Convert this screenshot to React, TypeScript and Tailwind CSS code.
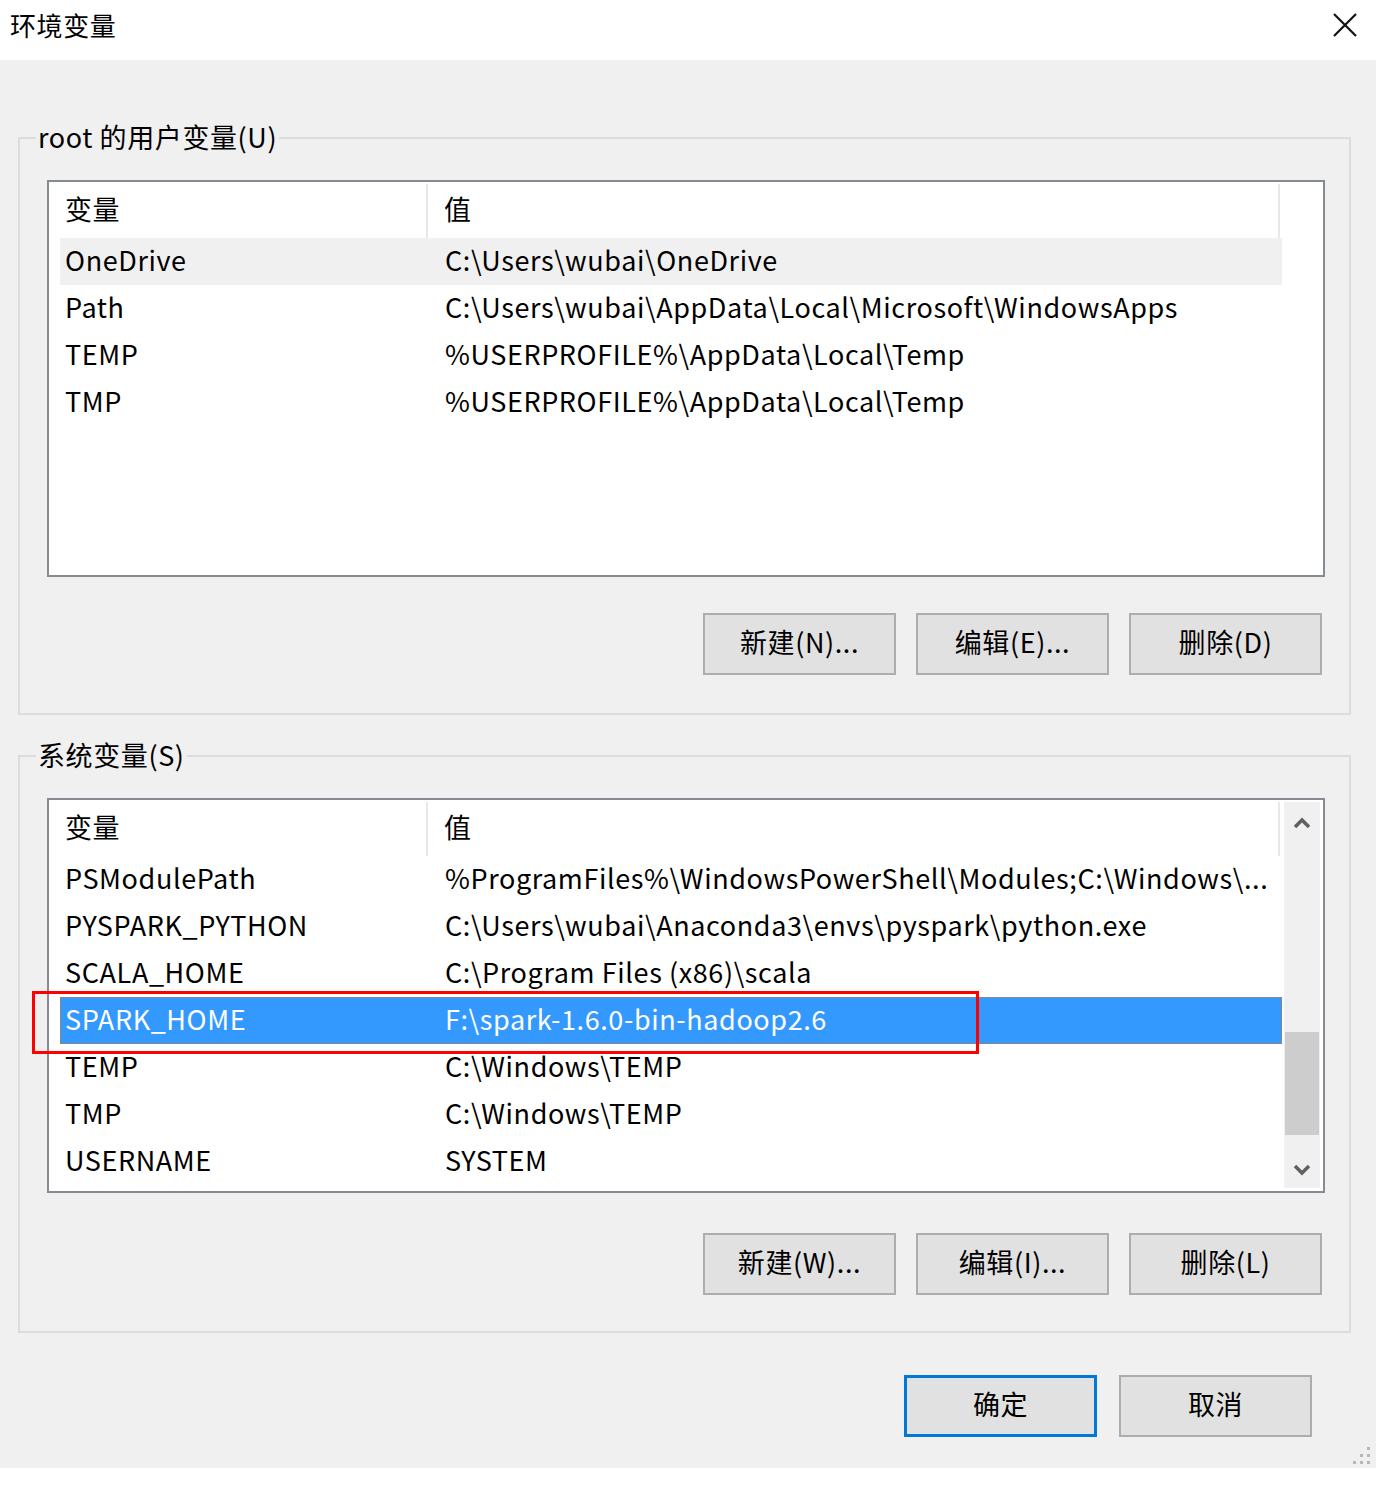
import React from "react";

type EnvVar = { name: string; value: string };

const userVars: EnvVar[] = [
  { name: "OneDrive", value: "C:\\Users\\wubai\\OneDrive" },
  { name: "Path", value: "C:\\Users\\wubai\\AppData\\Local\\Microsoft\\WindowsApps" },
  { name: "TEMP", value: "%USERPROFILE%\\AppData\\Local\\Temp" },
  { name: "TMP", value: "%USERPROFILE%\\AppData\\Local\\Temp" },
];

const systemVars: EnvVar[] = [
  { name: "PSModulePath", value: "%ProgramFiles%\\WindowsPowerShell\\Modules;C:\\Windows\\..." },
  { name: "PYSPARK_PYTHON", value: "C:\\Users\\wubai\\Anaconda3\\envs\\pyspark\\python.exe" },
  { name: "SCALA_HOME", value: "C:\\Program Files (x86)\\scala" },
  { name: "SPARK_HOME", value: "F:\\spark-1.6.0-bin-hadoop2.6" },
  { name: "TEMP", value: "C:\\Windows\\TEMP" },
  { name: "TMP", value: "C:\\Windows\\TEMP" },
  { name: "USERNAME", value: "SYSTEM" },
];

const font = "font-['Segoe_UI','Noto_Sans_CJK_SC',sans-serif]";

function DialogButton({ children, primary }: { children: string; primary?: boolean }) {
  return (
    <button
      className={
        "flex h-[62px] w-[193px] items-center justify-center bg-[#e1e1e1] pb-[4px] text-[27px] text-black " +
        (primary ? "border-[3px] border-[#0078d7]" : "border-2 border-[#adadad]")
      }
    >
      {children}
    </button>
  );
}

function HeaderRow() {
  return (
    <div className="flex h-[56px] w-[1220px] items-center pt-[2px]">
      <div className="flex h-full w-[368px] items-center border-r-2 border-[#e8e8e8] pb-[4px] pl-[5px]">变量</div>
      <div className="flex h-full flex-1 items-center border-r-2 border-[#e8e8e8] pb-[4px] pl-[16px]">值</div>
    </div>
  );
}

function VarRow({ item, hot, selected }: { item: EnvVar; hot?: boolean; selected?: boolean }) {
  return (
    <div
      className={
        "flex h-[47px] w-[1222px] items-center whitespace-nowrap pb-[2px] " +
        (selected
          ? "border border-dotted border-[#c97a1e] bg-[#3399ff] text-white"
          : hot
            ? "bg-[#f0f0f0]"
            : "")
      }
    >
      <div className={selected ? "w-[367px] pl-[4px]" : "w-[368px] pl-[5px]"}>{item.name}</div>
      <div className="pl-[17px]">{item.value}</div>
    </div>
  );
}

function Chevron({ up }: { up?: boolean }) {
  return (
    <svg width="20" height="14" viewBox="0 0 20 14" className="text-[#606060]">
      <polyline
        points={up ? "3,11 10,4 17,11" : "3,3 10,10 17,3"}
        fill="none"
        stroke="currentColor"
        strokeWidth="3.5"
      />
    </svg>
  );
}

function GroupBox({ label, children }: { label: string; children: React.ReactNode }) {
  return (
    <div className="relative ml-[18px] w-[1333px] border-2 border-[#dcdcdc]">
      <span className="absolute left-[16px] top-[-20px] bg-[#f0f0f0] px-[2px] text-[27px] leading-[36px]">
        {label}
      </span>
      {children}
    </div>
  );
}

export default function App() {
  return (
    <div className={`h-[1485px] w-[1376px] bg-white text-[27px] tracking-[0.6px] text-black ${font}`}>
      {/* title bar */}
      <div className="flex h-[60px] items-center justify-between">
        <span className="pb-[12px] pl-[10px] text-[26px]">环境变量</span>
        <svg width="26" height="26" viewBox="0 0 26 26" className="mb-[10px] mr-[18px]">
          <path d="M2 2 L24 24 M24 2 L2 24" stroke="#111" strokeWidth="2.2" />
        </svg>
      </div>

      <div className="relative flex h-[1408px] flex-col bg-[#f0f0f0] pt-[77px]">
        <GroupBox label="root 的用户变量(U)">
          <div className="ml-[27px] mt-[41px] h-[397px] w-[1278px] border-2 border-[#868a91] bg-white pl-[11px]">
            <HeaderRow />
            {userVars.map((v, i) => (
              <VarRow key={v.name} item={v} hot={i === 0} />
            ))}
          </div>
          <div className="mb-[38px] mt-[36px] flex gap-[20px] pl-[683px]">
            <DialogButton>新建(N)...</DialogButton>
            <DialogButton>编辑(E)...</DialogButton>
            <DialogButton>删除(D)</DialogButton>
          </div>
        </GroupBox>

        <div className="mt-[40px]">
          <GroupBox label="系统变量(S)">
            <div className="relative ml-[27px] mt-[41px] flex h-[395px] w-[1278px] border-2 border-[#868a91] bg-white pl-[11px]">
              <div className="flex flex-col">
                <HeaderRow />
                {systemVars.map((v) => (
                  <VarRow key={v.name} item={v} selected={v.name === "SPARK_HOME"} />
                ))}
              </div>
              {/* vertical scrollbar */}
              <div className="mb-[3px] ml-[2px] mt-[2px] flex w-[36px] flex-col items-center bg-[#f0f0f0]">
                <div className="flex h-[42px] items-center">
                  <Chevron up />
                </div>
                <div className="mt-[188px] h-[103px] w-[34px] bg-[#cdcdcd]" />
                <div className="mt-auto flex h-[36px] items-center">
                  <Chevron />
                </div>
              </div>
              {/* red callout around SPARK_HOME */}
              <div className="absolute left-[-17px] top-[191px] h-[63px] w-[947px] border-[3px] border-[#ff0000]" />
            </div>
            <div className="mb-[36px] mt-[40px] flex gap-[20px] pl-[683px]">
              <DialogButton>新建(W)...</DialogButton>
              <DialogButton>编辑(I)...</DialogButton>
              <DialogButton>删除(L)</DialogButton>
            </div>
          </GroupBox>
        </div>

        <div className="mt-[42px] flex gap-[22px] pl-[904px]">
          <DialogButton primary>确定</DialogButton>
          <DialogButton>取消</DialogButton>
        </div>

        {/* size grip */}
        <svg width="20" height="20" viewBox="0 0 20 20" className="absolute bottom-[1px] right-[3px]">
          <g fill="#b8b8b8">
            <rect x="14" y="0" width="3" height="3" />
            <rect x="7" y="7" width="3" height="3" />
            <rect x="14" y="7" width="3" height="3" />
            <rect x="0" y="14" width="3" height="3" />
            <rect x="7" y="14" width="3" height="3" />
            <rect x="14" y="14" width="3" height="3" />
          </g>
        </svg>
      </div>
    </div>
  );
}
